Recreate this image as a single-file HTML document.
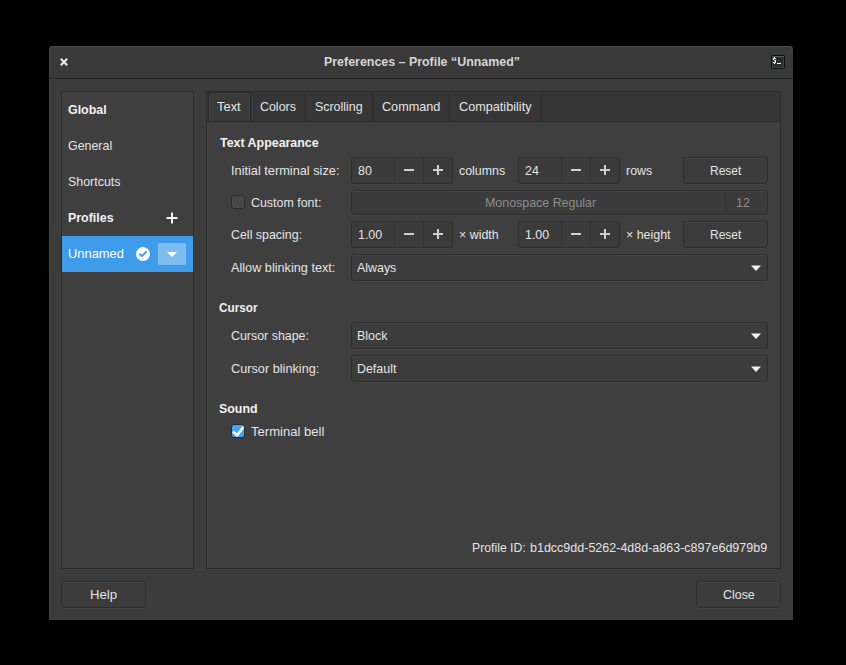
<!DOCTYPE html>
<html><head><meta charset="utf-8">
<style>
html,body{margin:0;padding:0;width:846px;height:665px;overflow:hidden;background:#000;}
body{position:relative;font-family:"Liberation Sans",sans-serif;}
.a{position:absolute;box-sizing:border-box;}
.t{position:absolute;white-space:nowrap;font-size:13px;line-height:16px;color:#e4e4e4;transform:scaleX(.955);transform-origin:0 0;}
.b{font-weight:bold;color:#f2f2f2;}
.d{color:#8c8c8c;}
#dlg{left:49px;top:46px;width:744px;height:574px;background:#3c3c3c;border-radius:4px 4px 0 0;overflow:hidden;box-shadow:inset 1px 1px 0 #474747;}
#hdr{left:0;top:0;width:744px;height:33px;background:#393939;border-bottom:1px solid #262626;box-shadow:inset 0 1px 0 #4c4c4c, inset 1px 0 0 #454545;border-radius:4px 4px 0 0;}
.frame{border:1px solid #2b2b2b;background:#3f3f3f;box-shadow:inset 1px 1px 0 #424242;}
.entry{border:1px solid #2e2e2e;background:#3b3b3b;border-radius:3px;box-shadow:0 1px 0 #444;}
.btn{border:1px solid #2e2e2e;background:#3c3c3c;border-radius:3px;box-shadow:inset 0 1px 0 #464646, 0 1px 0 #444;}
.vs{position:absolute;width:1px;background:#333;}
.chk{border:1px solid #2c2c2c;background:#464646;border-radius:3px;box-shadow:inset 0 0 0 1px #4b4b4b;}
</style></head><body>
<div id="dlg" class="a">
  <div id="hdr" class="a"></div>
</div>

<!-- header close X -->
<svg class="a" style="left:58px;top:56px" width="12" height="12" viewBox="0 0 12 12"><path d="M2.8 2.8L9.2 9.2M9.2 2.8L2.8 9.2" stroke="#e8e8e8" stroke-width="2.2" stroke-linecap="butt"/></svg>
<div class="t b" style="left:324px;top:54px;color:#d6d6d6">Preferences – Profile “Unnamed”</div>
<!-- terminal icon -->
<div class="a" style="left:771px;top:55px;width:14px;height:14px;background:#101010;border-radius:2px;"></div>
<div class="a" style="left:772px;top:56px;width:12px;height:12px;background:#2a2e2e;border:1px solid #3b4040;border-top-color:#5c5e5e;"></div>
<svg class="a" style="left:771px;top:55px" width="14" height="14" viewBox="0 0 14 14" shape-rendering="crispEdges" fill="#f0f0f0"><rect x="3" y="2" width="1" height="1"/><rect x="2" y="3" width="3" height="1"/><rect x="2" y="4" width="1" height="1"/><rect x="3" y="5" width="2" height="1"/><rect x="4" y="6" width="1" height="1"/><rect x="2" y="7" width="3" height="1"/><rect x="3" y="8" width="1" height="1"/><rect x="6" y="8" width="4" height="1"/></svg>
<!-- sidebar -->
<div class="a frame" style="left:61px;top:91px;width:133px;height:478px;"></div>
<div class="t b" style="left:68px;top:102px">Global</div>
<div class="t" style="left:68px;top:138px">General</div>
<div class="t" style="left:68px;top:174px">Shortcuts</div>
<div class="t b" style="left:68px;top:210px">Profiles</div>
<svg class="a" style="left:166px;top:212px" width="12" height="12" viewBox="0 0 12 12"><path d="M6 0.5V11.5M0.5 6H11.5" stroke="#f2f2f2" stroke-width="2"/></svg>
<div class="a" style="left:62px;top:236px;width:131px;height:36px;background:#3f9ceb;"></div>
<div class="t" style="left:68px;top:246px;color:#fff;transform:scaleX(0.991)">Unnamed</div>
<svg class="a" style="left:135px;top:246px" width="16" height="16" viewBox="0 0 16 16"><circle cx="8" cy="8" r="7" fill="#fff"/><path d="M4.4 7.7L6.9 10.1L11.6 5.4" stroke="#3f9ceb" stroke-width="2" fill="none"/></svg>
<div class="a" style="left:158px;top:243px;width:28px;height:22px;background:#7dbdf2;border-radius:2px;"></div>
<svg class="a" style="left:166px;top:251px" width="12" height="8" viewBox="0 0 12 8"><path d="M1 1H11L6 6Z" fill="#fff"/></svg>

<!-- notebook -->
<div class="a frame" style="left:206px;top:91px;width:575px;height:478px;background:#3f3f3f"></div>
<div class="a" style="left:207px;top:92px;width:573px;height:30px;background:#363636;border-bottom:1px solid #2a2a2a;"></div>
<div class="a" style="left:208px;top:92px;width:43px;height:29px;background:#3a3a3a;border:1px solid #2a2a2a;border-bottom:none;border-radius:3px 3px 0 0;box-shadow:inset 1px 1px 0 #404040, inset -1px 0 0 #424242;"></div>
<div class="vs" style="left:305px;top:92px;height:29px;background:#2c2c2c"></div>
<div class="vs" style="left:372px;top:92px;height:29px;background:#2c2c2c"></div>
<div class="vs" style="left:449px;top:92px;height:29px;background:#2c2c2c"></div>
<div class="vs" style="left:541px;top:92px;height:29px;background:#2c2c2c"></div>
<div class="t" style="left:217px;top:99px;transform:scaleX(0.993)">Text</div>
<div class="t" style="left:260px;top:99px">Colors</div>
<div class="t" style="left:315px;top:99px">Scrolling</div>
<div class="t" style="left:382px;top:99px;transform:scaleX(0.971)">Command</div>
<div class="t" style="left:459px;top:99px;transform:scaleX(0.974)">Compatibility</div>

<!-- Text Appearance -->
<div class="t b" style="left:220px;top:135px">Text Appearance</div>
<div class="t" style="left:231px;top:163px;transform:scaleX(0.981)">Initial terminal size:</div>
<div class="a entry" style="left:351px;top:157px;width:102px;height:27px;"></div>
<div class="vs" style="left:394px;top:158px;height:25px"></div>
<div class="vs" style="left:423px;top:158px;height:25px"></div>
<div class="t" style="left:358px;top:163px">80</div>
<div class="a" style="left:404px;top:169px;width:10px;height:2px;background:#d0d0d0"></div>
<div class="a" style="left:433px;top:169px;width:10px;height:2px;background:#d0d0d0"></div>
<div class="a" style="left:437px;top:165px;width:2px;height:10px;background:#d0d0d0"></div>
<div class="t" style="left:459px;top:163px">columns</div>
<div class="a entry" style="left:518px;top:157px;width:102px;height:27px;"></div>
<div class="vs" style="left:561px;top:158px;height:25px"></div>
<div class="vs" style="left:590px;top:158px;height:25px"></div>
<div class="t" style="left:525px;top:163px">24</div>
<div class="a" style="left:571px;top:169px;width:10px;height:2px;background:#d0d0d0"></div>
<div class="a" style="left:600px;top:169px;width:10px;height:2px;background:#d0d0d0"></div>
<div class="a" style="left:604px;top:165px;width:2px;height:10px;background:#d0d0d0"></div>
<div class="t" style="left:626px;top:163px">rows</div>
<div class="a btn" style="left:683px;top:157px;width:85px;height:27px;"></div>
<div class="t" style="left:710px;top:163px;transform:scaleX(0.919)">Reset</div>

<div class="a chk" style="left:231px;top:195px;width:14px;height:14px;"></div>
<div class="t" style="left:251px;top:195px">Custom font:</div>
<div class="a btn" style="left:351px;top:190px;width:417px;height:25px;background:#3b3b3b;"></div>
<div class="vs" style="left:725px;top:194px;height:17px"></div>
<div class="t d" style="left:485px;top:195px">Monospace Regular</div>
<div class="t d" style="left:736px;top:195px">12</div>

<div class="t" style="left:231px;top:227px">Cell spacing:</div>
<div class="a entry" style="left:351px;top:221px;width:102px;height:27px;"></div>
<div class="vs" style="left:394px;top:222px;height:25px"></div>
<div class="vs" style="left:423px;top:222px;height:25px"></div>
<div class="t" style="left:358px;top:227px">1.00</div>
<div class="a" style="left:404px;top:233px;width:10px;height:2px;background:#d0d0d0"></div>
<div class="a" style="left:433px;top:233px;width:10px;height:2px;background:#d0d0d0"></div>
<div class="a" style="left:437px;top:229px;width:2px;height:10px;background:#d0d0d0"></div>
<div class="t" style="left:459px;top:227px">× width</div>
<div class="a entry" style="left:518px;top:221px;width:102px;height:27px;"></div>
<div class="vs" style="left:561px;top:222px;height:25px"></div>
<div class="vs" style="left:590px;top:222px;height:25px"></div>
<div class="t" style="left:525px;top:227px">1.00</div>
<div class="a" style="left:571px;top:233px;width:10px;height:2px;background:#d0d0d0"></div>
<div class="a" style="left:600px;top:233px;width:10px;height:2px;background:#d0d0d0"></div>
<div class="a" style="left:604px;top:229px;width:2px;height:10px;background:#d0d0d0"></div>
<div class="t" style="left:626px;top:227px">× height</div>
<div class="a btn" style="left:683px;top:221px;width:85px;height:27px;"></div>
<div class="t" style="left:710px;top:227px;transform:scaleX(0.919)">Reset</div>

<div class="t" style="left:231px;top:260px;transform:scaleX(0.976)">Allow blinking text:</div>
<div class="a btn" style="left:351px;top:254px;width:417px;height:27px;"></div>
<div class="t" style="left:357px;top:260px">Always</div>
<svg class="a" style="left:750px;top:264px" width="12" height="8" viewBox="0 0 12 8"><path d="M1 1.5H11L6 7Z" fill="#f0f0f0"/></svg>

<!-- Cursor -->
<div class="t b" style="left:219px;top:300px;transform:scaleX(0.903)">Cursor</div>
<div class="t" style="left:231px;top:328px">Cursor shape:</div>
<div class="a btn" style="left:351px;top:322px;width:417px;height:27px;"></div>
<div class="t" style="left:357px;top:328px">Block</div>
<svg class="a" style="left:750px;top:332px" width="12" height="8" viewBox="0 0 12 8"><path d="M1 1.5H11L6 7Z" fill="#f0f0f0"/></svg>
<div class="t" style="left:231px;top:361px;transform:scaleX(0.978)">Cursor blinking:</div>
<div class="a btn" style="left:351px;top:355px;width:417px;height:27px;"></div>
<div class="t" style="left:357px;top:361px">Default</div>
<svg class="a" style="left:750px;top:365px" width="12" height="8" viewBox="0 0 12 8"><path d="M1 1.5H11L6 7Z" fill="#f0f0f0"/></svg>

<!-- Sound -->
<div class="t b" style="left:219px;top:401px">Sound</div>
<div class="a" style="left:231px;top:424px;width:14px;height:14px;background:#4aa3ee;border-radius:3px;border:1px solid #1f2b36;"></div>
<svg class="a" style="left:231px;top:424px" width="14" height="14" viewBox="0 0 14 14"><path d="M2 7.6L6.2 11.2L12.4 3" stroke="#fff" stroke-width="2.5" fill="none"/></svg>
<div class="t" style="left:251px;top:424px;transform:scaleX(1.006)">Terminal bell</div>

<div class="t" style="left:471.5px;top:540px;transform:scaleX(.942)">Profile ID:</div>
<div class="t" style="left:529.7px;top:540px;transform:scaleX(.962)">b1dcc9dd-5262-4d8d-a863-c897e6d979b9</div>

<!-- bottom buttons -->
<div class="a btn" style="left:61px;top:581px;width:85px;height:27px;"></div>
<div class="t" style="left:89.5px;top:587px;transform:scaleX(1.008)">Help</div>
<div class="a btn" style="left:696px;top:581px;width:85px;height:27px;"></div>
<div class="t" style="left:723px;top:587px">Close</div>

</body></html>
